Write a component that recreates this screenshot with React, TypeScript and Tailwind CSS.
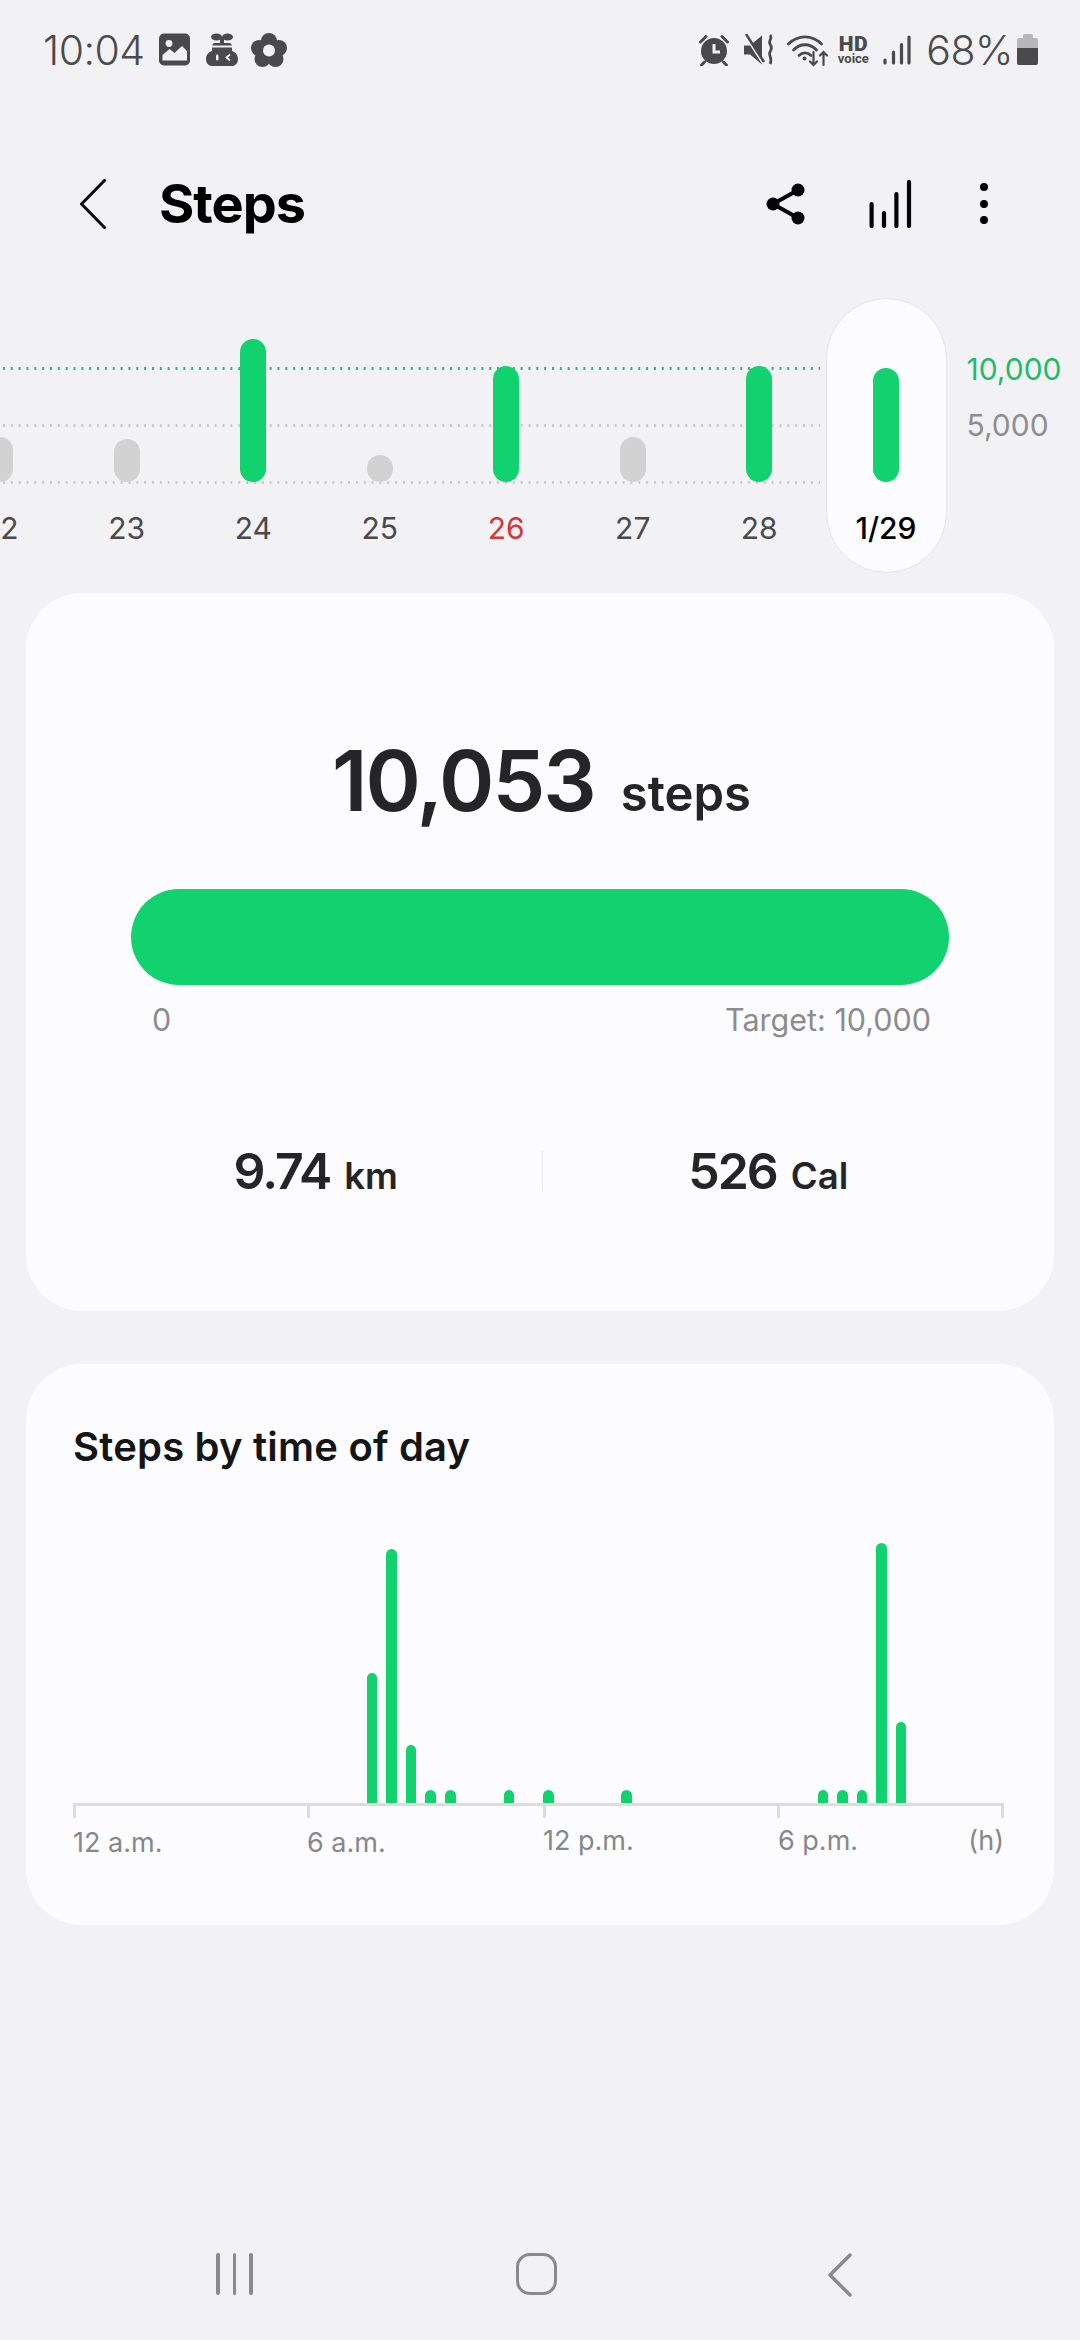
const green = 'bg-[#12d16f]';

const week = [
  { label: '22', height: 45, goal: false, color: 'text-[#4a4a4c]' },
  { label: '23', height: 43, goal: false, color: 'text-[#4a4a4c]' },
  { label: '24', height: 143, goal: true, color: 'text-[#4a4a4c]' },
  { label: '25', height: 27, goal: false, color: 'text-[#4a4a4c]' },
  { label: '26', height: 116, goal: true, color: 'text-[#cf3a39]' },
  { label: '27', height: 45, goal: false, color: 'text-[#4a4a4c]' },
  { label: '28', height: 116, goal: true, color: 'text-[#4a4a4c]' },
];

// half hour bins, everything else is empty
const bins: Record<number, number> = {
  15: 130, 16: 254, 17: 58, 18: 13, 19: 13, 22: 13, 24: 13, 28: 13,
  38: 13, 39: 13, 40: 13, 41: 260, 42: 81,
};

function StatusLeft() {
  return (
    <div className="flex items-center">
      <span className="text-[41px] font-light leading-[40px] tracking-[-0.5px] text-[#4b4b4d]">10:04</span>
      <svg width="32" height="33" viewBox="0 0 32 33" className="ml-[14px]">
        <rect width="31" height="32" y="0.5" rx="5" fill="#4a4a4c" />
        <circle cx="10" cy="10.5" r="3.4" fill="#f2f2f4" />
        <path d="M3.5 27.5V22l7-6 5 4 7.5-7 5 5v9.5z" fill="#f2f2f4" />
      </svg>
      <svg width="32" height="33" viewBox="0 0 32 33" className="ml-[15px]">
        <ellipse cx="10.5" cy="4" rx="5.500" ry="3.500" fill="#4a4a4c" />
        <ellipse cx="21.500" cy="4" rx="5.500" ry="3.500" fill="#4a4a4c" />
        <rect x="14" y="4" width="4" height="6" fill="#4a4a4c" />
        <path d="M9 10h14c2 0 3 2 3 4v4c3 1 6 3.500 6 8 0 4-2.500 7-6 7H6c-3.500 0-6-3-6-7 0-4.500 3-7 6-8v-4c0-2 1-4 3-4z" fill="#4a4a4c" />
        <rect x="5" y="12.500" width="22" height="2" fill="#f2f2f4" />
        <rect x="10" y="21.500" width="2.500" height="6" rx="1.200" fill="#f2f2f4" />
        <path d="M24 21.500l-3.500 3 3.500 3" fill="none" stroke="#f2f2f4" strokeWidth="1.800" />
      </svg>
      <svg width="36" height="34" viewBox="0 0 36 34" className="ml-[13px]">
        <g fill="#4a4a4c">
          <circle cx="18" cy="8" r="8" />
          <circle cx="8" cy="15" r="8" />
          <circle cx="28" cy="15" r="8" />
          <circle cx="11.500" cy="26" r="8" />
          <circle cx="24.500" cy="26" r="8" />
        </g>
        <circle cx="18" cy="17.500" r="6" fill="#f2f2f4" />
      </svg>
    </div>
  );
}

function StatusRight() {
  return (
    <div className="flex items-center">
      <svg width="30" height="32" viewBox="0 0 30 32">
        <circle cx="15" cy="17" r="13" fill="#4a4a4c" />
        <path d="M1.500 8L7 2.500M28.500 8L23 2.500M5.500 28l-3 3M24.500 28l3 3" stroke="#4a4a4c" strokeWidth="3" strokeLinecap="round" />
        <path d="M15 10v8h6" fill="none" stroke="#f2f2f4" strokeWidth="3" />
      </svg>
      <svg width="30" height="32" viewBox="0 0 30 32" className="ml-[15px]">
        <path d="M0 11.500h6l12-10v29l-12-10H0z" fill="#4a4a4c" />
        <path d="M2 2l17 27" stroke="#f2f2f4" strokeWidth="3" />
        <path d="M2 0l18 28" stroke="#4a4a4c" strokeWidth="2.500" />
        <path d="M26 1c3 3-2 6 0 9s2 5 0 8 3 6 0 12" fill="none" stroke="#4a4a4c" strokeWidth="2.800" />
      </svg>
      <svg width="42" height="34" viewBox="0 0 42 34" className="ml-[13px]" fill="none" stroke="#4a4a4c" strokeLinecap="round">
        <path d="M1.500 11C11 1.500 25 1.500 34.500 11" strokeWidth="2.800" />
        <path d="M6.500 17C13 10 23 10 29.500 17" strokeWidth="2.800" />
        <path d="M12 22.500C15.500 19 20.500 19 24 22.500" strokeWidth="2.800" />
        <circle cx="17.500" cy="25.500" r="2" fill="#4a4a4c" stroke="none" />
        <path d="M26.500 19v13M23 28.500l3.500 3.500 3.500-3.500M36.500 32V19M33 22.500l3.500-3.500 3.500 3.500" strokeWidth="2.200" />
      </svg>
      <div className="ml-[7px] flex w-[34px] flex-col items-center font-['Roboto',sans-serif] text-[#4a4a4c]">
        <span className="text-[21px] font-black leading-[18px] tracking-[0.5px]">HD</span>
        <span className="text-[13px] font-bold leading-[12px]">voice</span>
      </div>
      <svg width="28" height="30" viewBox="0 0 28 30" className="ml-[13px]" stroke="#4a4a4c" strokeWidth="3.200" strokeLinecap="round">
        <path d="M2 28v-3M10.500 28V17M18.500 28V9.500M26 28V2" />
      </svg>
      <span className="ml-[15px] text-[41px] font-light leading-[40px] tracking-[-0.5px] text-[#4b4b4d]">68%</span>
      <div className="ml-[4px] flex w-[21px] flex-col items-center">
        <div className="h-[4px] w-[10px] rounded-t-[2px] bg-[#b8b8ba]" />
        <div className="h-[10px] w-full rounded-t-[2px] bg-[#b8b8ba]" />
        <div className="h-[17px] w-full rounded-b-[2px] bg-[#4a4a4c]" />
      </div>
    </div>
  );
}

function Header() {
  return (
    <div className="flex h-[199px] items-center pl-[80px] pr-[92px] pt-[10px]">
      <svg width="26" height="50" viewBox="0 0 26 50" fill="none" stroke="#0a0a0a" strokeWidth="3" strokeLinecap="round" strokeLinejoin="round">
        <path d="M24.500 1.500L1.500 25l23 23.500" />
      </svg>
      <h1 className="ml-[53px] text-[54px] font-bold leading-[60px] tracking-[-1px] text-black">Steps</h1>
      <div className="ml-auto flex items-center">
        <svg width="40" height="42" viewBox="0 0 40 42" fill="#050505">
          <circle cx="7" cy="21" r="6.500" />
          <circle cx="32" cy="7" r="6.500" />
          <circle cx="32" cy="35" r="6.500" />
          <path d="M7 21L32 7M7 21l25 14" stroke="#050505" strokeWidth="4" />
        </svg>
        <svg width="44" height="48" viewBox="0 0 44 48" className="ml-[63px]" stroke="#050505" strokeWidth="4.200" strokeLinecap="round">
          <path d="M2.600 46V24M15 46V33M27.400 46V14M40 46V2" />
        </svg>
        <div className="ml-[67px] flex flex-col gap-[8.500px]">
          <div className="size-[8px] rounded-full bg-black" />
          <div className="size-[8px] rounded-full bg-black" />
          <div className="size-[8px] rounded-full bg-black" />
        </div>
      </div>
    </div>
  );
}

function WeekChart() {
  return (
    <div className="relative h-[295px] overflow-hidden">
      {/* goal lines sit behind the bars */}
      <div className="absolute left-0 top-[69px] h-[3px] w-[820px] bg-[radial-gradient(circle,#1dbb6e_1.1px,transparent_1.4px)] bg-[length:7.850px_3px]" />
      <div className="absolute left-0 top-[126px] h-[3px] w-[820px] bg-[radial-gradient(circle,#c8c8ca_1.1px,transparent_1.4px)] bg-[length:7.850px_3px]" />
      <div className="absolute left-0 top-[183px] h-[3px] w-[820px] bg-[radial-gradient(circle,#c8c8ca_1.1px,transparent_1.4px)] bg-[length:7.850px_3px]" />

      <div className="relative ml-[-63px] flex items-start">
        {week.map((day) => (
          <div key={day.label} className="flex w-[126.500px] shrink-0 flex-col items-center">
            <div className="flex h-[184px] items-end">
              <div
                className={`w-[26px] rounded-full ${day.goal ? green : 'bg-[#d2d2d2]'}`}
                style={{ height: day.height }}
              />
            </div>
            <span className={`mt-[26px] text-[30px] leading-[40px] ${day.color}`}>{day.label}</span>
          </div>
        ))}

        <div className="ml-[3px] flex h-[275px] w-[121px] shrink-0 flex-col items-center rounded-full border border-[#e4e4e6] bg-[#fcfcfe]">
          <div className={`mt-[69px] h-[114px] w-[26px] rounded-full ${green}`} />
          <span className="mt-[26px] text-[30px] font-medium leading-[40px] text-black">1/29</span>
        </div>

        <div className="ml-[20px] flex flex-col text-[30px]">
          <span className="mt-[51px] leading-[40px] text-[#1fbb6c]">10,000</span>
          <span className="mt-[16px] leading-[40px] text-[#8e8e90]">5,000</span>
        </div>
      </div>
    </div>
  );
}

function SummaryCard() {
  return (
    <section className="mx-[26px] flex h-[718px] flex-col rounded-[56px] bg-[#fcfcfe]">
      <div className="mt-[146px] flex items-baseline justify-center pl-[3px]">
        <span className="text-[84px] font-semibold leading-[84px] tracking-[-2px] text-[#252528]">10,053</span>
        <span className="ml-[26px] text-[49px] font-semibold leading-[49px] text-[#252528]">steps</span>
      </div>
      <div className={`mx-[105px] mt-[66px] h-[96px] rounded-full ${green}`} />
      <div className="mt-[15px] flex justify-between pl-[126px] pr-[123px] text-[30.500px] leading-[40px] text-[#8c8c8e]">
        <span>0</span>
        <span>Target: 10,000</span>
      </div>
      <div className="ml-[64px] mr-[60px] mt-[106px] grid grid-cols-[1fr_1px_1fr] items-center">
        <div className="flex items-baseline justify-center text-[#252528]">
          <span className="text-[50px] font-semibold leading-[50px] tracking-[-2px]">9.74</span>
          <span className="ml-[14px] text-[36.500px] font-semibold leading-[36px]">km</span>
        </div>
        <div className="h-[40px] bg-[#e8e8ea]" />
        <div className="flex items-baseline justify-center text-[#252528]">
          <span className="text-[50px] font-semibold leading-[50px] tracking-[-2px]">526</span>
          <span className="ml-[14px] text-[36.500px] font-semibold leading-[36px]">Cal</span>
        </div>
      </div>
    </section>
  );
}

function TimeOfDayCard() {
  return (
    <section className="mx-[26px] mt-[53px] flex h-[561px] flex-col rounded-[56px] bg-[#fcfcfe] pl-[47px]">
      <h2 className="mt-[63px] text-[40px] font-semibold leading-[40px] tracking-[0.2px] text-[#151517]">Steps by time of day</h2>
      <div className="w-[931px]">
        <div className="ml-[-5px] grid h-[336px] w-[941px] grid-cols-[repeat(48,1fr)] items-end">
          {Array.from({ length: 48 }, (_, i) => (
            <div key={i} className="flex justify-center">
              {bins[i] ? (
                <div className={`w-[10.500px] rounded-t-full ${green}`} style={{ height: bins[i] }} />
              ) : null}
            </div>
          ))}
        </div>
        <div className="h-[3px] bg-[#dcdcde]" />
        <div className="flex">
          <div className="h-[12px] w-[3px] bg-[#dcdcde]" />
          <div className="ml-[231px] h-[12px] w-[3px] bg-[#dcdcde]" />
          <div className="ml-[233px] h-[12px] w-[3px] bg-[#dcdcde]" />
          <div className="ml-[231px] h-[12px] w-[3px] bg-[#dcdcde]" />
          <div className="ml-auto h-[12px] w-[3px] bg-[#dcdcde]" />
        </div>
        <div className="grid grid-cols-[234px_236px_235px_1fr] text-[27px] leading-[36px] text-[#87878a]">
          <span className="mt-[7px]">12 a.m.</span>
          <span className="mt-[7px]">6 a.m.</span>
          <span className="mt-[5px]">12 p.m.</span>
          <span className="mt-[5px] flex justify-between">
            <span>6 p.m.</span>
            <span>(h)</span>
          </span>
        </div>
      </div>
    </section>
  );
}

function NavBar() {
  return (
    <div className="mt-auto flex h-[116px] items-start pt-[29px]">
      <div className="ml-[216px] flex h-[42px] gap-[13px]">
        <div className="h-full w-[3.500px] rounded-full bg-[#8a8a8c]" />
        <div className="h-full w-[3.500px] rounded-full bg-[#8a8a8c]" />
        <div className="h-full w-[3.500px] rounded-full bg-[#8a8a8c]" />
      </div>
      <div className="ml-[263px] h-[42px] w-[41px] rounded-[14px] border-[3.500px] border-[#8a8a8c]" />
      <svg width="26" height="44" viewBox="0 0 26 44" className="ml-[270px]" fill="none" stroke="#8a8a8c" strokeWidth="3.500" strokeLinecap="round" strokeLinejoin="round">
        <path d="M23 2L3 22l20 20" />
      </svg>
    </div>
  );
}

export default function App() {
  return (
    <div className="flex h-[2340px] w-[1080px] flex-col overflow-hidden bg-[#f2f2f4] font-['Inter',sans-serif]">
      <div className="flex h-[99px] items-center justify-between pl-[43px] pr-[42px]">
        <StatusLeft />
        <StatusRight />
      </div>
      <Header />
      <WeekChart />
      <SummaryCard />
      <TimeOfDayCard />
      <NavBar />
    </div>
  );
}
